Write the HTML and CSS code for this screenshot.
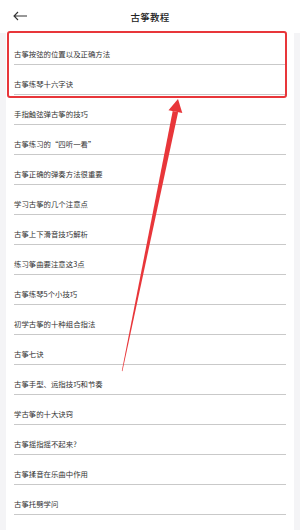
FILE: index.html
```html
<!DOCTYPE html>
<html lang="zh-CN">
    <head>
        <meta charset="UTF-8" />
        <meta name="viewport" content="width=device-width, initial-scale=1.0" />
        <title>古筝教程</title>
        <link rel="stylesheet" href="styles.css">
    </head>
    <body>
        <div class="header">
            <svg class="back" width="16" height="10" viewBox="0 0 16 10">
                <path d="M2 5H15M6 1L2 5L6 9" fill="none" stroke="#333" stroke-width="1.1" />
            </svg>
            <div class="title">古筝教程</div>
        </div>
        <ul class="list">
            <li class="item">古筝按弦的位置以及正确方法</li>
            <li class="item">古筝练琴十六字诀</li>
            <li class="item">手指触弦弹古筝的技巧</li>
            <li class="item">古筝练习的“四听一看”</li>
            <li class="item">古筝正确的弹奏方法很重要</li>
            <li class="item">学习古筝的几个注意点</li>
            <li class="item">古筝上下滑音技巧解析</li>
            <li class="item">练习筝曲要注意这3点</li>
            <li class="item">古筝练琴5个小技巧</li>
            <li class="item">初学古筝的十种组合指法</li>
            <li class="item">古筝七诀</li>
            <li class="item">古筝手型、运指技巧和节奏</li>
            <li class="item">学古筝的十大诀窍</li>
            <li class="item">古筝摇指摇不起来?</li>
            <li class="item">古筝揉音在乐曲中作用</li>
            <li class="item">古筝托劈学问</li>
            <li class="item"></li>
        </ul>
        <!-- 标注：红框 + 箭头 -->
        <div class="mark"></div>
        <svg class="arrow" width="300" height="530" viewBox="0 0 300 530">
            <polygon points="172.7,111 178.1,112.3 122.4,371.2 121.8,371" fill="#e8363a" />
            <polygon points="178,99 168.5,110.3 182.3,113.1" fill="#e8363a" />
        </svg>
    </body>
</html>
```

FILE: styles.css
```css
* {
    padding: 0;
    margin: 0;
    box-sizing: border-box;
}
body {
    position: relative;
    width: 300px;
    height: 530px;
    overflow: hidden;
    background-color: #f4f4f6;
    font-family: "Noto Sans CJK SC", "Noto Sans", sans-serif;
    color: #333;
}
.header {
    position: relative;
    height: 33px;
    background-color: #fff;
    display: flex;
    justify-content: center;
    align-items: center;
}
.back {
    position: absolute;
    left: 12px;
    top: 11px;
}
.title {
    font-size: 9.5px;
    font-weight: 500;
    color: #222;
    letter-spacing: 0.2px;
}
.list {
    list-style: none;
    margin: 0 6px;
    padding-top: 2px;
    background-color: #fff;
}
.item {
    height: 30px;
    margin: 0 8px;
    padding-top: 14px;
    line-height: 10px;
    font-size: 7.4px;
    border-bottom: 1px solid #c9c9c9;
}
.mark {
    position: absolute;
    left: 7px;
    top: 31px;
    width: 280px;
    height: 67px;
    border: 2.5px solid #e8363a;
    border-radius: 3px;
}
.arrow {
    position: absolute;
    left: 0;
    top: 0;
}
```
